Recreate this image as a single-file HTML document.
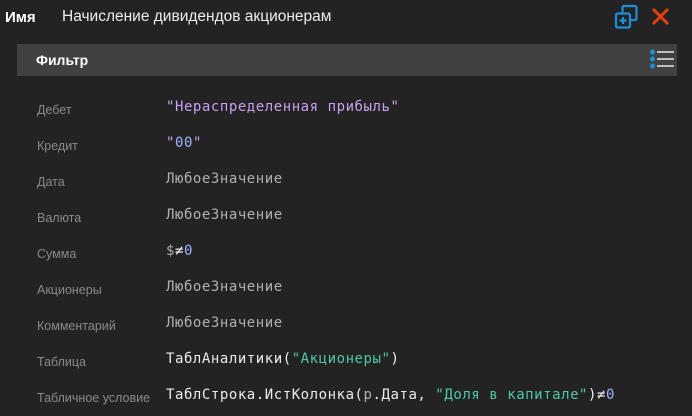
<!DOCTYPE html>
<html><head><meta charset="utf-8"><style>
body{margin:0;width:692px;height:416px;background:#232323;overflow:hidden;font-family:"Liberation Sans",sans-serif;position:relative}
.a{position:absolute;white-space:nowrap}
.lbl{left:37px;color:#8a8a8a;font-size:12.5px}
.val{left:166px;font-family:"DejaVu Sans Mono","Liberation Mono",monospace;font-size:14px;letter-spacing:.55px}
.p{color:#c9a0f2}.g{color:#b0b0b0}.w{color:#ececec}.t{color:#4ec9a8}.b{color:#9fb4ff}
</style></head><body>
<div class="a" style="left:5px;top:9px;color:#fff;font-weight:bold;font-size:15px">Имя</div>
<div class="a" style="left:62px;top:8px;color:#eee;font-size:15.5px">Начисление дивидендов акционерам</div>
<svg class="a" style="left:614px;top:4px" width="30" height="26" viewBox="0 0 30 26">
<rect x="8.5" y="2" width="14" height="14" rx="1.5" fill="none" stroke="#1e8fd6" stroke-width="2.2"/>
<rect x="2" y="9.5" width="14" height="14" rx="1.5" fill="#232323" stroke="#1e8fd6" stroke-width="2.2"/>
<path d="M9 13v7M5.5 16.5h7" stroke="#1e8fd6" stroke-width="2.2"/>
</svg>
<svg class="a" style="left:651px;top:7px" width="19" height="19" viewBox="0 0 19 19"><path d="M2 2L17 17M17 2L2 17" stroke="#e8400e" stroke-width="3"/></svg>
<div class="a" style="left:17px;top:44px;width:660px;height:32px;background:#414141"></div>
<div class="a" style="left:36px;top:52px;color:#fff;font-weight:bold;font-size:14px">Фильтр</div>
<svg class="a" style="left:648px;top:48px" width="28" height="24" viewBox="0 0 28 24">
<circle cx="4.5" cy="4" r="2.5" fill="#1e8fd6"/><circle cx="4.5" cy="11" r="2.5" fill="#1e8fd6"/><circle cx="4.5" cy="18" r="2.5" fill="#1e8fd6"/>
<path d="M9 4h17M9 11h17M9 18h17" stroke="#d0d0d0" stroke-width="1.8"/></svg>

<div class="a lbl" style="top:103px">Дебет</div><div class="a val p" style="top:99px">"Нераспределенная прибыль"</div>
<div class="a lbl" style="top:139px">Кредит</div><div class="a val p" style="top:135px">"<span class="b">00</span>"</div>
<div class="a lbl" style="top:175px">Дата</div><div class="a val g" style="top:171px">ЛюбоеЗначение</div>
<div class="a lbl" style="top:211px">Валюта</div><div class="a val g" style="top:207px">ЛюбоеЗначение</div>
<div class="a lbl" style="top:247px">Сумма</div><div class="a val" style="top:243px"><span class="g">$</span><span class="w">≠</span><span class="b">0</span></div>
<div class="a lbl" style="top:283px">Акционеры</div><div class="a val g" style="top:279px">ЛюбоеЗначение</div>
<div class="a lbl" style="top:319px">Комментарий</div><div class="a val g" style="top:315px">ЛюбоеЗначение</div>
<div class="a lbl" style="top:355px">Таблица</div><div class="a val w" style="top:351px">ТаблАналитики(<span class="t">"Акционеры"</span>)</div>
<div class="a lbl" style="top:391px">Табличное условие</div><div class="a val w" style="top:387px">ТаблСтрока.ИстКолонка(<span class="g">р</span>.Дата, <span class="t">"Доля в капитале"</span>)≠<span class="b">0</span></div>
</body></html>
